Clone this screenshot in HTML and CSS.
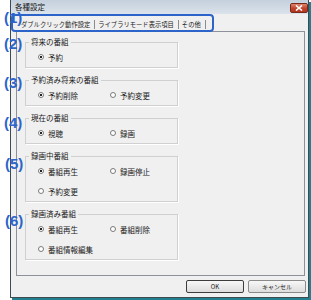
FILE: index.html
```html
<!DOCTYPE html>
<html lang="ja">
<head>
  <meta charset="UTF-8">
  <meta name="viewport" content="width=device-width, initial-scale=1.0">
  <title>各種設定</title>
  <link rel="stylesheet" href="styles.css">
</head>
<body>
  <div class="screen">
    <!-- ダイアログ本体 -->
    <div class="window">
      <div class="titlebar">
        <span class="title">各種設定</span>
        <span class="close">
          <svg width="8" height="6" viewBox="0 0 8 6">
            <path d="M1 0.5 L7 5.5 M7 0.5 L1 5.5" stroke="#fff" stroke-width="1.6"/>
          </svg>
        </span>
      </div>

      <!-- タブ -->
      <div class="tabs">
        <span class="tab active">ダブルクリック動作設定</span>
        <span class="tab">ライブラリモード表示項目</span>
        <span class="tab">その他</span>
      </div>

      <div class="panel">
        <fieldset class="group">
          <legend>将来の番組</legend>
          <div class="options">
            <label class="opt"><span class="radio on"></span>予約</label>
          </div>
        </fieldset>

        <fieldset class="group">
          <legend>予約済み将来の番組</legend>
          <div class="options">
            <label class="opt"><span class="radio on"></span>予約削除</label>
            <label class="opt"><span class="radio"></span>予約変更</label>
          </div>
        </fieldset>

        <fieldset class="group">
          <legend>現在の番組</legend>
          <div class="options">
            <label class="opt"><span class="radio on"></span>視聴</label>
            <label class="opt"><span class="radio"></span>録画</label>
          </div>
        </fieldset>

        <fieldset class="group">
          <legend>録画中番組</legend>
          <div class="options">
            <label class="opt"><span class="radio on"></span>番組再生</label>
            <label class="opt"><span class="radio"></span>録画停止</label>
            <label class="opt"><span class="radio"></span>予約変更</label>
          </div>
        </fieldset>

        <fieldset class="group">
          <legend>録画済み番組</legend>
          <div class="options">
            <label class="opt"><span class="radio on"></span>番組再生</label>
            <label class="opt"><span class="radio"></span>番組削除</label>
            <label class="opt"><span class="radio"></span>番組情報編集</label>
          </div>
        </fieldset>
      </div>

      <div class="actions">
        <button class="btn default">OK</button>
        <button class="btn">キャンセル</button>
      </div>
    </div>

    <!-- 説明用の番号 -->
    <div class="mark-tabs"></div>
    <span class="num n1">(1)</span>
    <span class="num n2">(2)</span>
    <span class="num n3">(3)</span>
    <span class="num n4">(4)</span>
    <span class="num n5">(5)</span>
    <span class="num n6">(6)</span>
  </div>
</body>
</html>
```

FILE: styles.css
```css
/* 全体 */
body {
  margin: 0;
  background: #fff;
}

.screen {
  position: relative;
  width: 311px;
  height: 300px;
  overflow: hidden;
  font-family: "Noto Sans CJK JP", sans-serif;
  color: #1a1a1a;
}

/* ウィンドウ */
.window {
  margin-left: 10px;
  width: 299px;
  height: 298px;
  box-sizing: border-box;
  border: 1px solid #3f4a52;
  border-top: 0;
  background: #f0f0f0;
  box-shadow: 2px 2px 0 #23808f;
  display: flex;
  flex-direction: column;
}

.titlebar {
  height: 14px;
  display: flex;
  justify-content: space-between;
  background: linear-gradient(#c4d0dc, #dbe3eb);
  padding-left: 4px;
}

.title {
  font-size: 7.5px;
  line-height: 14px;
}

.close {
  margin-top: 3px;
  width: 18px;
  height: 10px;
  box-sizing: border-box;
  border: 1px solid #7a2a1c;
  border-radius: 2px;
  background: linear-gradient(#e0856e, #c0432a 55%, #b33720);
  display: flex;
  align-items: center;
  justify-content: center;
}

/* タブ */
.tabs {
  display: flex;
  align-items: center;
  height: 14px;
  margin: 3px 0 0 8px;
  font-size: 6.3px;
}

.tab {
  padding: 0 4px 0 3px;
  line-height: 9px;
  border-right: 1px solid #8c8c8c;
  white-space: nowrap;
}

.tab.active {
  padding-left: 2px;
}

.panel {
  height: 245px;
  margin: 0 3px 0 5px;
  box-sizing: border-box;
  border: 1px solid #8e9199;
  padding: 6px 0 0 8px;
}

/* グループボックス */
.group {
  width: 153px;
  box-sizing: border-box;
  margin: 0;
  padding: 0;
  min-width: 0;
  border: 1px solid #d0d0d0;
  box-shadow: 1px 1px 0 #fff;
}

.group + .group {
  margin-top: 8px;
}

.group legend {
  font-size: 7.5px;
  line-height: 8px;
  padding: 0 2px;
  margin-left: 3px;
}

.options {
  display: grid;
  grid-template-columns: 72px 1fr;
  grid-auto-rows: 20px;
  padding: 1px 0 0 12px;
  font-size: 7.5px;
}

.opt {
  display: flex;
  align-items: center;
  gap: 4px;
  white-space: nowrap;
}

.radio {
  width: 6px;
  height: 6px;
  box-sizing: border-box;
  border: 1px solid #7a7a7a;
  border-radius: 50%;
  background: #fff;
}

.radio.on {
  background: radial-gradient(circle, #222 0 1px, #fff 1.4px);
}

/* ボタン */
.actions {
  display: flex;
  justify-content: flex-end;
  gap: 4px;
  margin: 4px 2px 0 0;
}

.btn {
  width: 58px;
  height: 13px;
  padding: 0;
  border: 1px solid #8a8a8a;
  border-radius: 2px;
  background: linear-gradient(#f7f7f7, #dddddd);
  font-family: "Noto Sans CJK JP", sans-serif;
  font-size: 6px;
  line-height: 11px;
  color: #1a1a1a;
}

.btn.default {
  border-color: #3c3c3c;
}

/* 注釈 */
.mark-tabs {
  position: absolute;
  left: 11px;
  top: 14px;
  width: 203px;
  height: 18px;
  box-sizing: border-box;
  border: 2px solid #2d64c9;
  border-radius: 4px;
}

.num {
  position: absolute;
  left: 4px;
  font-family: "Liberation Sans", Arial, sans-serif;
  font-weight: bold;
  font-size: 15px;
  line-height: 15px;
  color: #2d64c9;
}

.n1 { top: 10px; }
.n2 { top: 36px; }
.n3 { top: 75px; }
.n4 { top: 115px; }
.n5 { top: 156px; left: 5px; }
.n6 { top: 213px; left: 5px; }
```
